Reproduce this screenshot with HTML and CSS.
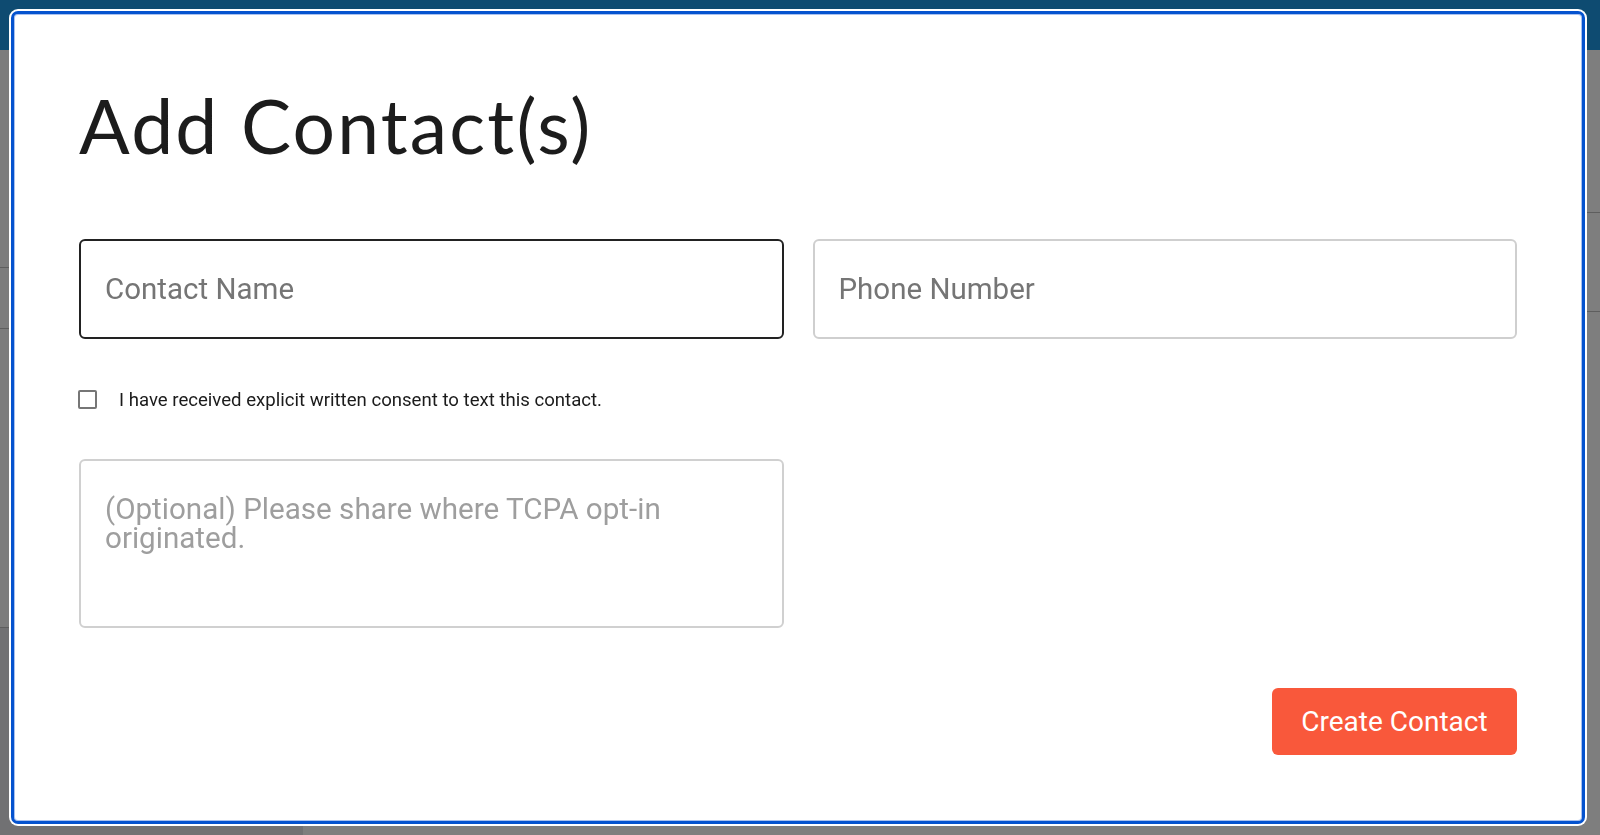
FILE: index.html
```html
<!DOCTYPE html>
<html lang="en">
<head>
<meta charset="utf-8">
<title>Add Contact(s)</title>
<link rel="stylesheet" href="styles.css">
</head>
<body>
<div class="backdrop">
  <div class="topbar"></div>
  <div class="main">
    <div class="sidebar">
      <div class="sec s1"></div>
      <div class="sec s2"></div>
      <div class="sec s3"></div>
      <div class="sec s4"></div>
    </div>
    <div class="content">
      <div class="sec c1"></div>
      <div class="sec c2"></div>
      <div class="sec c3"></div>
    </div>
  </div>
</div>

<div class="modal">
  <h1 class="title">Add Contact(s)</h1>
  <div class="fields">
    <input class="field field-focus" type="text" placeholder="Contact Name">
    <input class="field" type="text" placeholder="Phone Number">
  </div>
  <label class="consent">
    <span class="checkbox"></span>
    <span class="consent-text">I have received explicit written consent to text this contact.</span>
  </label>
  <div class="notes-row">
    <textarea class="notes" placeholder="(Optional) Please share where TCPA opt-in originated."></textarea>
  </div>
  <div class="actions">
    <button class="btn-create" type="button">Create Contact</button>
  </div>
</div>
</body>
</html>
```

FILE: styles.css
```css
* { box-sizing: border-box; }
html, body { margin: 0; padding: 0; }
body {
  width: 1600px;
  height: 835px;
  overflow: hidden;
  background: #7c7c7c;
  font-family: Roboto, "Liberation Sans", sans-serif;
}
.backdrop {
  display: flex;
  flex-direction: column;
  height: 835px;
}
.topbar {
  height: 50px;
  background: #0e4b71;
}
.main {
  flex: 1;
  display: flex;
}
.sidebar {
  width: 303px;
  display: flex;
  flex-direction: column;
}
.content {
  flex: 1;
  display: flex;
  flex-direction: column;
  background: #7e7e7e;
}
.sec { border-bottom: 1px solid #5e5e5e; }
.s1 { height: 218px; }
.s2 { height: 61px; }
.s3 { height: 299px; }
.s4 { flex: 1; background: #717173; border-bottom: 0; }
.c1 { height: 163px; }
.c2 { height: 99px; }
.c3 { flex: 1; border-bottom: 0; }

.modal {
  position: fixed;
  left: 11px;
  top: 11px;
  width: 1574px;
  height: 813px;
  background: #fff;
  border: 3px solid #0553cf;
  border-radius: 7px;
  box-shadow: 0 0 0 2px #fff, inset 0 0 0 1px #a9c1ef;
  padding: 0 65px;
  display: flex;
  flex-direction: column;
}
.title {
  margin: 63px 0 0 0;
  font-family: Lato, "Noto Sans", sans-serif;
  font-weight: 400;
  font-size: 75px;
  line-height: 96px;
  color: #1c1c1c;
  letter-spacing: 2.2px;
}
.fields {
  margin-top: 66px;
  display: grid;
  grid-template-columns: 1fr 1fr;
  column-gap: 29px;
}
.field {
  height: 100px;
  border: 2px solid #cfcfcf;
  border-radius: 6px;
  padding: 0 0 0 24px;
  font-family: Roboto, "Liberation Sans", sans-serif;
  font-size: 29.5px;
  color: #333;
  background: #fff;
  outline: none;
}
.field::placeholder { color: #757575; }
.field-focus { border-color: #222; }

.consent {
  margin-top: 51px;
  display: flex;
  align-items: center;
  gap: 22px;
  height: 19px;
}
.checkbox {
  width: 19px;
  height: 19px;
  margin-left: -1px;
  border: 2px solid #767676;
  border-radius: 2px;
  flex: none;
}
.consent-text {
  font-size: 18.6px;
  color: #1b1b1b;
}
.notes-row {
  margin-top: 50px;
  display: grid;
  grid-template-columns: 1fr 1fr;
  column-gap: 29px;
}
.notes {
  height: 169px;
  border: 2px solid #d0d0d0;
  border-radius: 6px;
  padding: 34px 24px 0;
  font-family: Roboto, "Liberation Sans", sans-serif;
  font-size: 29.6px;
  line-height: 29px;
  resize: none;
  outline: none;
}
.notes::placeholder { color: #9e9e9e; }
.actions {
  margin-top: 60px;
  display: flex;
  justify-content: flex-end;
}
.btn-create {
  width: 245px;
  height: 67px;
  border: 0;
  border-radius: 6px;
  background: #f9583b;
  color: #fff;
  font-family: Roboto, "Liberation Sans", sans-serif;
  font-size: 28px;
  font-weight: 400;
  padding: 0;
}
```
